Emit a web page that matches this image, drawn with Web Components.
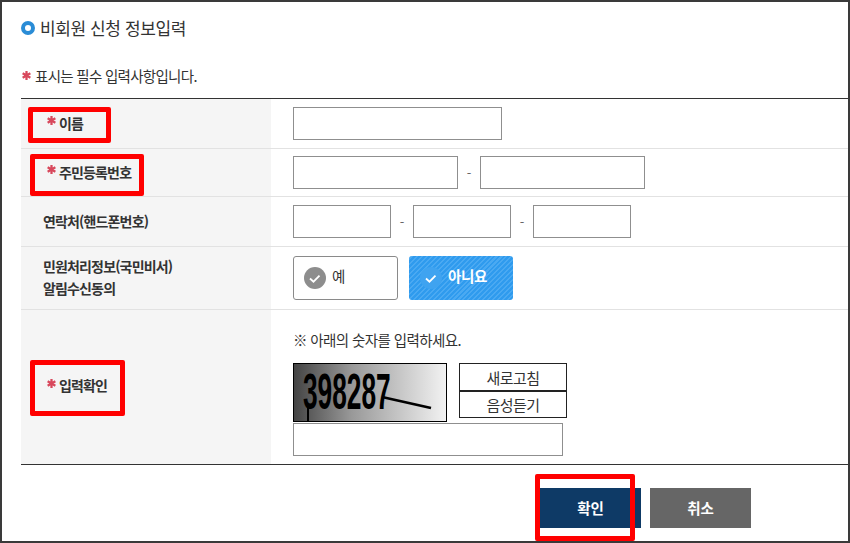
<!DOCTYPE html>
<html lang="ko">
<head>
<meta charset="utf-8">
<title>비회원 신청 정보입력</title>
<style>
  html, body { margin: 0; padding: 0; background: #fff; }
  body { font-family: "Noto Sans CJK KR", "Noto Sans", sans-serif; color: #333; }
</style>
</head>
<body>
<apply-form></apply-form>
<script>
const STAR = `<svg class="star" width="9" height="9" viewBox="0 0 10 10"><g stroke="#d8485c" stroke-width="2.5"><path d="M5 0v10M.7 2.5l8.6 5M9.3 2.5l-8.6 5"/></g></svg>`;

class FormRow extends HTMLElement {
    connectedCallback() {
        const h = this.getAttribute('height');
        const star = this.hasAttribute('required') ? STAR : '';
        this.attachShadow({ mode: 'open' }).innerHTML = `
            <style>
                :host { display: grid; grid-template-columns: 250px 1fr; height: ${h}px; border-bottom: 1px solid #e2e2e2; box-sizing: border-box; }
                :host([last]) { border-bottom: 0; }
                .label { background: #f5f5f5; display: flex; align-items: center; gap: 3px; padding: 0 0 ${this.getAttribute('label-shift') || 2}px ${star ? 26 : 22}px;
                    font-size: 14px; font-weight: 700; letter-spacing: -0.85px; line-height: 22px; color: #333; }
                .star { margin-bottom: 4px; flex: none; }
                .value { padding-left: 22px; display: flex; flex-direction: column; justify-content: center; }
            </style>
            <div class="label">${star}<span><slot name="label"></slot></span></div>
            <div class="value"><slot></slot></div>`;
    }
}

class TextBox extends HTMLElement {
    connectedCallback() {
        this.attachShadow({ mode: 'open' }).innerHTML = `
            <style>
                :host { display: block; box-sizing: border-box; border: 1px solid #8f8f8f; background: #fff; height: 33px; }
            </style>`;
        this.style.width = this.getAttribute('w') + 'px';
    }
}

class FieldGroup extends HTMLElement {
    connectedCallback() {
        const ws = this.getAttribute('widths').split(',');
        const sep = this.hasAttribute('sep');
        this.attachShadow({ mode: 'open' }).innerHTML = `
            <style>
                :host { display: flex; align-items: center; }
                span { width: 22px; text-align: center; font-size: 13px; color: #666; }
            </style>
            ${ws.map(w => `<text-box w="${w}"></text-box>`).join(sep ? '<span>-</span>' : '')}`;
    }
}

class ChoiceButton extends HTMLElement {
    connectedCallback() {
        const on = this.hasAttribute('on');
        this.attachShadow({ mode: 'open' }).innerHTML = `
            <style>
                :host { display: flex; align-items: center; box-sizing: border-box; width: 105px; height: 44px; border-radius: 3px; border: 1px solid #8a8a8a; background: #fff; color: #333; font-size: 14.5px; padding: 0 0 4px 10px; letter-spacing: -0.4px; }
                :host([on]) { width: 104px; border: 0; padding-left: 11px; color: #fff; font-weight: 700; background: #2f9bee repeating-linear-gradient(135deg, #2f9bee 0 2px, #4aa9f2 2px 3.5px); }
                svg { flex: none; margin: 4px 6px 0 0; }
            </style>
            <svg width="22" height="22" viewBox="0 0 22 22">
                <circle cx="11" cy="11" r="11" fill="${on ? '#3fa3f0' : '#8d8d8d'}"/>
                <path d="M6 11.5l3.5 3.2 6-6" fill="none" stroke="#fff" stroke-width="1.8"/>
            </svg>
            <span><slot></slot></span>`;
    }
}

class CaptchaBox extends HTMLElement {
    connectedCallback() {
        this.attachShadow({ mode: 'open' }).innerHTML = `
            <style>
                :host { display: block; padding-top: 12px; }
                .hint { font-size: 14.5px; letter-spacing: -0.6px; line-height: 20px; margin-bottom: 13px; color: #333; }
                .top { display: flex; gap: 12px; align-items: flex-start; margin-bottom: 1px; }
                .img { position: relative; box-sizing: border-box; width: 154px; height: 59px; border: 1px solid #000; background: linear-gradient(90deg, #444 0%, #999 38%, #f2f2f2 100%); overflow: hidden; }
                .code { position: absolute; left: 9px; top: 3px; font: 700 50px/50px "Liberation Sans", sans-serif; color: #000; transform: scaleX(.525); transform-origin: 0 0; white-space: nowrap; }
                .img svg { position: absolute; left: 0; top: 0; }
                .btns { display: flex; flex-direction: column; width: 108px; }
                .btns div { box-sizing: border-box; height: 28px; border: 1px solid #222; display: flex; align-items: center; justify-content: center; font-size: 15px; letter-spacing: -0.6px; color: #333; background: #fff; }
                .btns div + div { margin-top: -1px; border-top-width: 2px; }
            </style>
            <div class="hint">※ 아래의 숫자를 입력하세요.</div>
            <div class="top">
                <div class="img">
                    <span class="code">398287</span>
                    <svg width="152" height="57" viewBox="0 0 152 57">
                        <path d="M88 33L137 44" stroke="#000" stroke-width="2.8"/>
                        <path d="M14 41V57" stroke="#000" stroke-width="2"/>
                    </svg>
                </div>
                <div class="btns"><div>새로고침</div><div>음성듣기</div></div>
            </div>
            <text-box w="270"></text-box>`;
    }
}

class ActionButton extends HTMLElement {
    connectedCallback() {
        this.attachShadow({ mode: 'open' }).innerHTML = `
            <style>
                :host { display: flex; align-items: center; justify-content: center; width: 101px; height: 40px; color: #fff; font-size: 14.5px; font-weight: 700; background: ${this.getAttribute('color')}; padding-bottom: 2px; box-sizing: border-box; }
            </style>
            <slot></slot>`;
    }
}

// red rectangles drawn on top of the screenshot
class MarkBox extends HTMLElement {
    connectedCallback() {
        const [x, y, w, h] = this.getAttribute('rect').split(',');
        this.attachShadow({ mode: 'open' }).innerHTML = `
            <style>
                :host { position: absolute; left: ${x}px; top: ${y}px; width: ${w}px; height: ${h}px; box-sizing: border-box; border: 5px solid #f00; border-radius: 2px; }
            </style>`;
    }
}

class ApplyForm extends HTMLElement {
    connectedCallback() {
        this.attachShadow({ mode: 'open' }).innerHTML = `
            <style>
                :host { display: block; position: relative; width: 850px; height: 543px; box-sizing: border-box; border: 2px solid #3a3a3a; overflow: hidden; background: #fff; }
                .title { display: flex; align-items: center; gap: 5px; padding: 13px 0 0 19px; height: 25px; font-size: 17px; letter-spacing: -0.4px; color: #333; }
                .dot { box-sizing: border-box; width: 14px; height: 14px; border-radius: 50%; border: 4px solid #2a8cd6; background: #fff; }
                .note { display: flex; align-items: center; gap: 4px; padding: 25px 0 0 20px; height: 20px; font-size: 14.5px; letter-spacing: -0.7px; color: #333; }
                .note svg { flex: none; }
                .table { margin: 13px 0 0 19px; border-top: 1px solid #333; border-bottom: 1px solid #333; }
                .actions { display: flex; gap: 9px; padding: 23px 0 0 538px; }
            </style>
            <div class="title"><span class="dot"></span>비회원 신청 정보입력</div>
            <div class="note">${STAR}표시는 필수 입력사항입니다.</div>
            <div class="table">
                <form-row height="50" required><span slot="label">이름</span><field-group widths="209"></field-group></form-row>
                <form-row height="48" required><span slot="label">주민등록번호</span><field-group widths="165,165" sep></field-group></form-row>
                <form-row height="50"><span slot="label">연락처(핸드폰번호)</span><field-group widths="98,98,98" sep></field-group></form-row>
                <form-row height="63"><span slot="label">민원처리정보(국민비서)<br>알림수신동의</span>
                    <div style="display:flex;gap:11px;padding-bottom:1px"><choice-button>예</choice-button><choice-button on>아니요</choice-button></div>
                </form-row>
                <form-row height="154" required last label-shift="4"><span slot="label">입력확인</span><captcha-box></captcha-box></form-row>
            </div>
            <div class="actions">
                <action-button color="#0e3a66">확인</action-button>
                <action-button color="#666666">취소</action-button>
            </div>
            <mark-box rect="26,105,83,36"></mark-box>
            <mark-box rect="28,152,114,42"></mark-box>
            <mark-box rect="28,358,95,56"></mark-box>
            <mark-box rect="533,472,100,67"></mark-box>`;
    }
}

customElements.define('form-row', FormRow);
customElements.define('text-box', TextBox);
customElements.define('field-group', FieldGroup);
customElements.define('choice-button', ChoiceButton);
customElements.define('captcha-box', CaptchaBox);
customElements.define('action-button', ActionButton);
customElements.define('mark-box', MarkBox);
customElements.define('apply-form', ApplyForm);
</script>
</body>
</html>
